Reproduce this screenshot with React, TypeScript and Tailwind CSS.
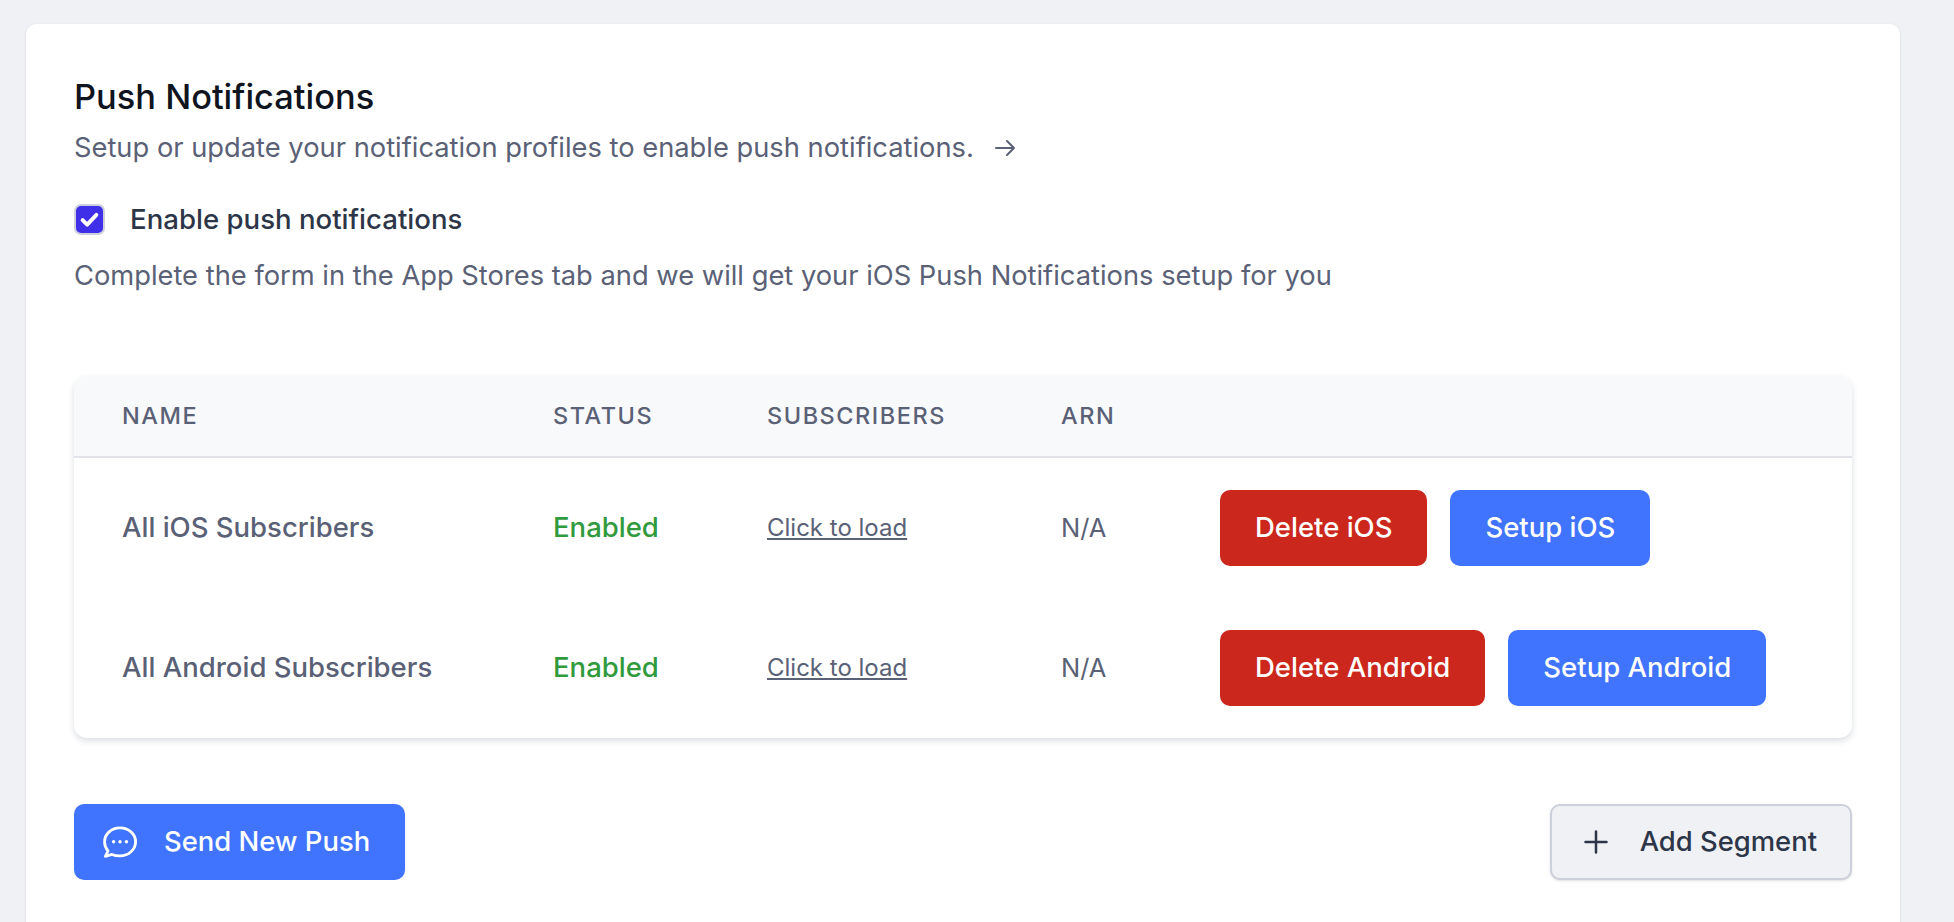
import React from "react";

const font = { fontFamily: "Inter, 'Noto Sans', sans-serif" };

function BubbleIcon() {
  return (
    <svg viewBox="0 0 34 32" className="h-[32px] w-[34px]" fill="none" stroke="currentColor" strokeWidth="2.8" strokeLinecap="round" strokeLinejoin="round">
      <path d="M9 28.4c2.2 1 5 1.4 8 1.4 8.6 0 15.6-6.2 15.6-14S25.6 1.8 17 1.8 1.6 8 1.6 15.8c0 3.8 1.3 6.8 3.4 9.2L2.4 30.4 9 28.4z" />
      <circle cx="10.6" cy="15.8" r="1.7" fill="currentColor" stroke="none" />
      <circle cx="17" cy="15.8" r="1.7" fill="currentColor" stroke="none" />
      <circle cx="23.4" cy="15.8" r="1.7" fill="currentColor" stroke="none" />
    </svg>
  );
}

function Row({ name, a, b }: { name: string; a: string; b: string }) {
  return (
    <div className="grid h-[140px] grid-cols-[479px_214px_294px_159px_1fr] items-center">
      <div className="pl-12 text-[27.5px] font-medium text-[#5a6176]">{name}</div>
      <div className="text-[27.5px] font-medium text-[#319a3c]">Enabled</div>
      <div><a className="text-[24px] text-[#5a6176] underline">Click to load</a></div>
      <div className="text-[25.5px] text-[#5a6176]">N/A</div>
      <div className="flex gap-[23px]">
        <button className="h-[76px] rounded-[10px] bg-[#cb271c] px-[35px] text-[27.5px] font-medium text-white">{a}</button>
        <button className="h-[76px] rounded-[10px] bg-[#4074ff] px-[35px] text-[27.5px] font-medium text-white">{b}</button>
      </div>
    </div>
  );
}

export default function App() {
  return (
    <div style={font} className="h-[922px] overflow-hidden bg-[#f0f1f5] pl-[26px] pr-[54px] pt-[24px]">
      <div className="h-[1000px] rounded-t-[10px] bg-white px-[48px] pt-[52px] shadow-sm">
        <h2 className="text-[34.4px] font-medium leading-[42px] text-[#10141f]">Push Notifications</h2>
        <div className="mt-[12px] flex items-center text-[27.3px] leading-[36px] text-[#5a6176]">
          <span>Setup or update your notification profiles to enable push notifications.</span>
          <svg viewBox="0 0 24 24" className="ml-[19px] h-[24px] w-[24px]" fill="none" stroke="currentColor" strokeWidth="2" strokeLinecap="round" strokeLinejoin="round">
            <path d="M3 12h18M14 5l7 7-7 7" />
          </svg>
        </div>
        <div className="mt-[35px] flex items-center">
          <div className="flex h-[31px] w-[31px] items-center justify-center rounded-[7px] border-2 border-[#cdd0da] bg-[#3f2fe8]">
            <svg viewBox="0 0 20 20" className="h-[23px] w-[23px]" fill="none" stroke="white" strokeWidth="3.4" strokeLinecap="round" strokeLinejoin="round">
              <path d="M4 10.5l4 4 8-8.5" />
            </svg>
          </div>
          <span className="ml-[25px] text-[27.6px] font-medium leading-[36px] text-[#2d3648]">Enable push notifications</span>
        </div>
        <p className="mt-[21px] text-[27.3px] leading-[36px] text-[#5a6176]">Complete the form in the App Stores tab and we will get your iOS Push Notifications setup for you</p>

        <div className="mt-[82px] rounded-[13px] bg-white shadow-[0_3px_6px_rgba(40,50,80,0.16)]">
          <div className="grid h-[82px] grid-cols-[479px_214px_294px_159px_1fr] items-center rounded-t-[13px] border-b-2 border-[#e2e3ea] bg-[#f8f9fb] text-[23.5px] font-medium uppercase tracking-[0.065em] text-[#5a6176]">
            <div className="pl-12">Name</div>
            <div>Status</div>
            <div>Subscribers</div>
            <div>ARN</div>
            <div />
          </div>
          <Row name="All iOS Subscribers" a="Delete iOS" b="Setup iOS" />
          <Row name="All Android Subscribers" a="Delete Android" b="Setup Android" />
        </div>

        <div className="mt-[66px] flex justify-between">
          <button className="flex h-[76px] items-center rounded-[10px] bg-[#4074ff] pl-[29px] pr-[35px] text-[27.4px] font-medium text-white">
            <BubbleIcon />
            <span className="ml-[27px]">Send New Push</span>
          </button>
          <button className="flex h-[76px] items-center rounded-[10px] border-2 border-[#ccd0da] bg-[#f0f1f5] pl-[32px] pr-[33px] text-[27.4px] font-medium text-[#2d3648] shadow-sm">
            <svg viewBox="0 0 24 24" className="h-[24px] w-[24px]" fill="none" stroke="currentColor" strokeWidth="2.5" strokeLinecap="round">
              <path d="M12 1.5v21M1.5 12h21" />
            </svg>
            <span className="ml-[32px]">Add Segment</span>
          </button>
        </div>
      </div>
    </div>
  );
}
